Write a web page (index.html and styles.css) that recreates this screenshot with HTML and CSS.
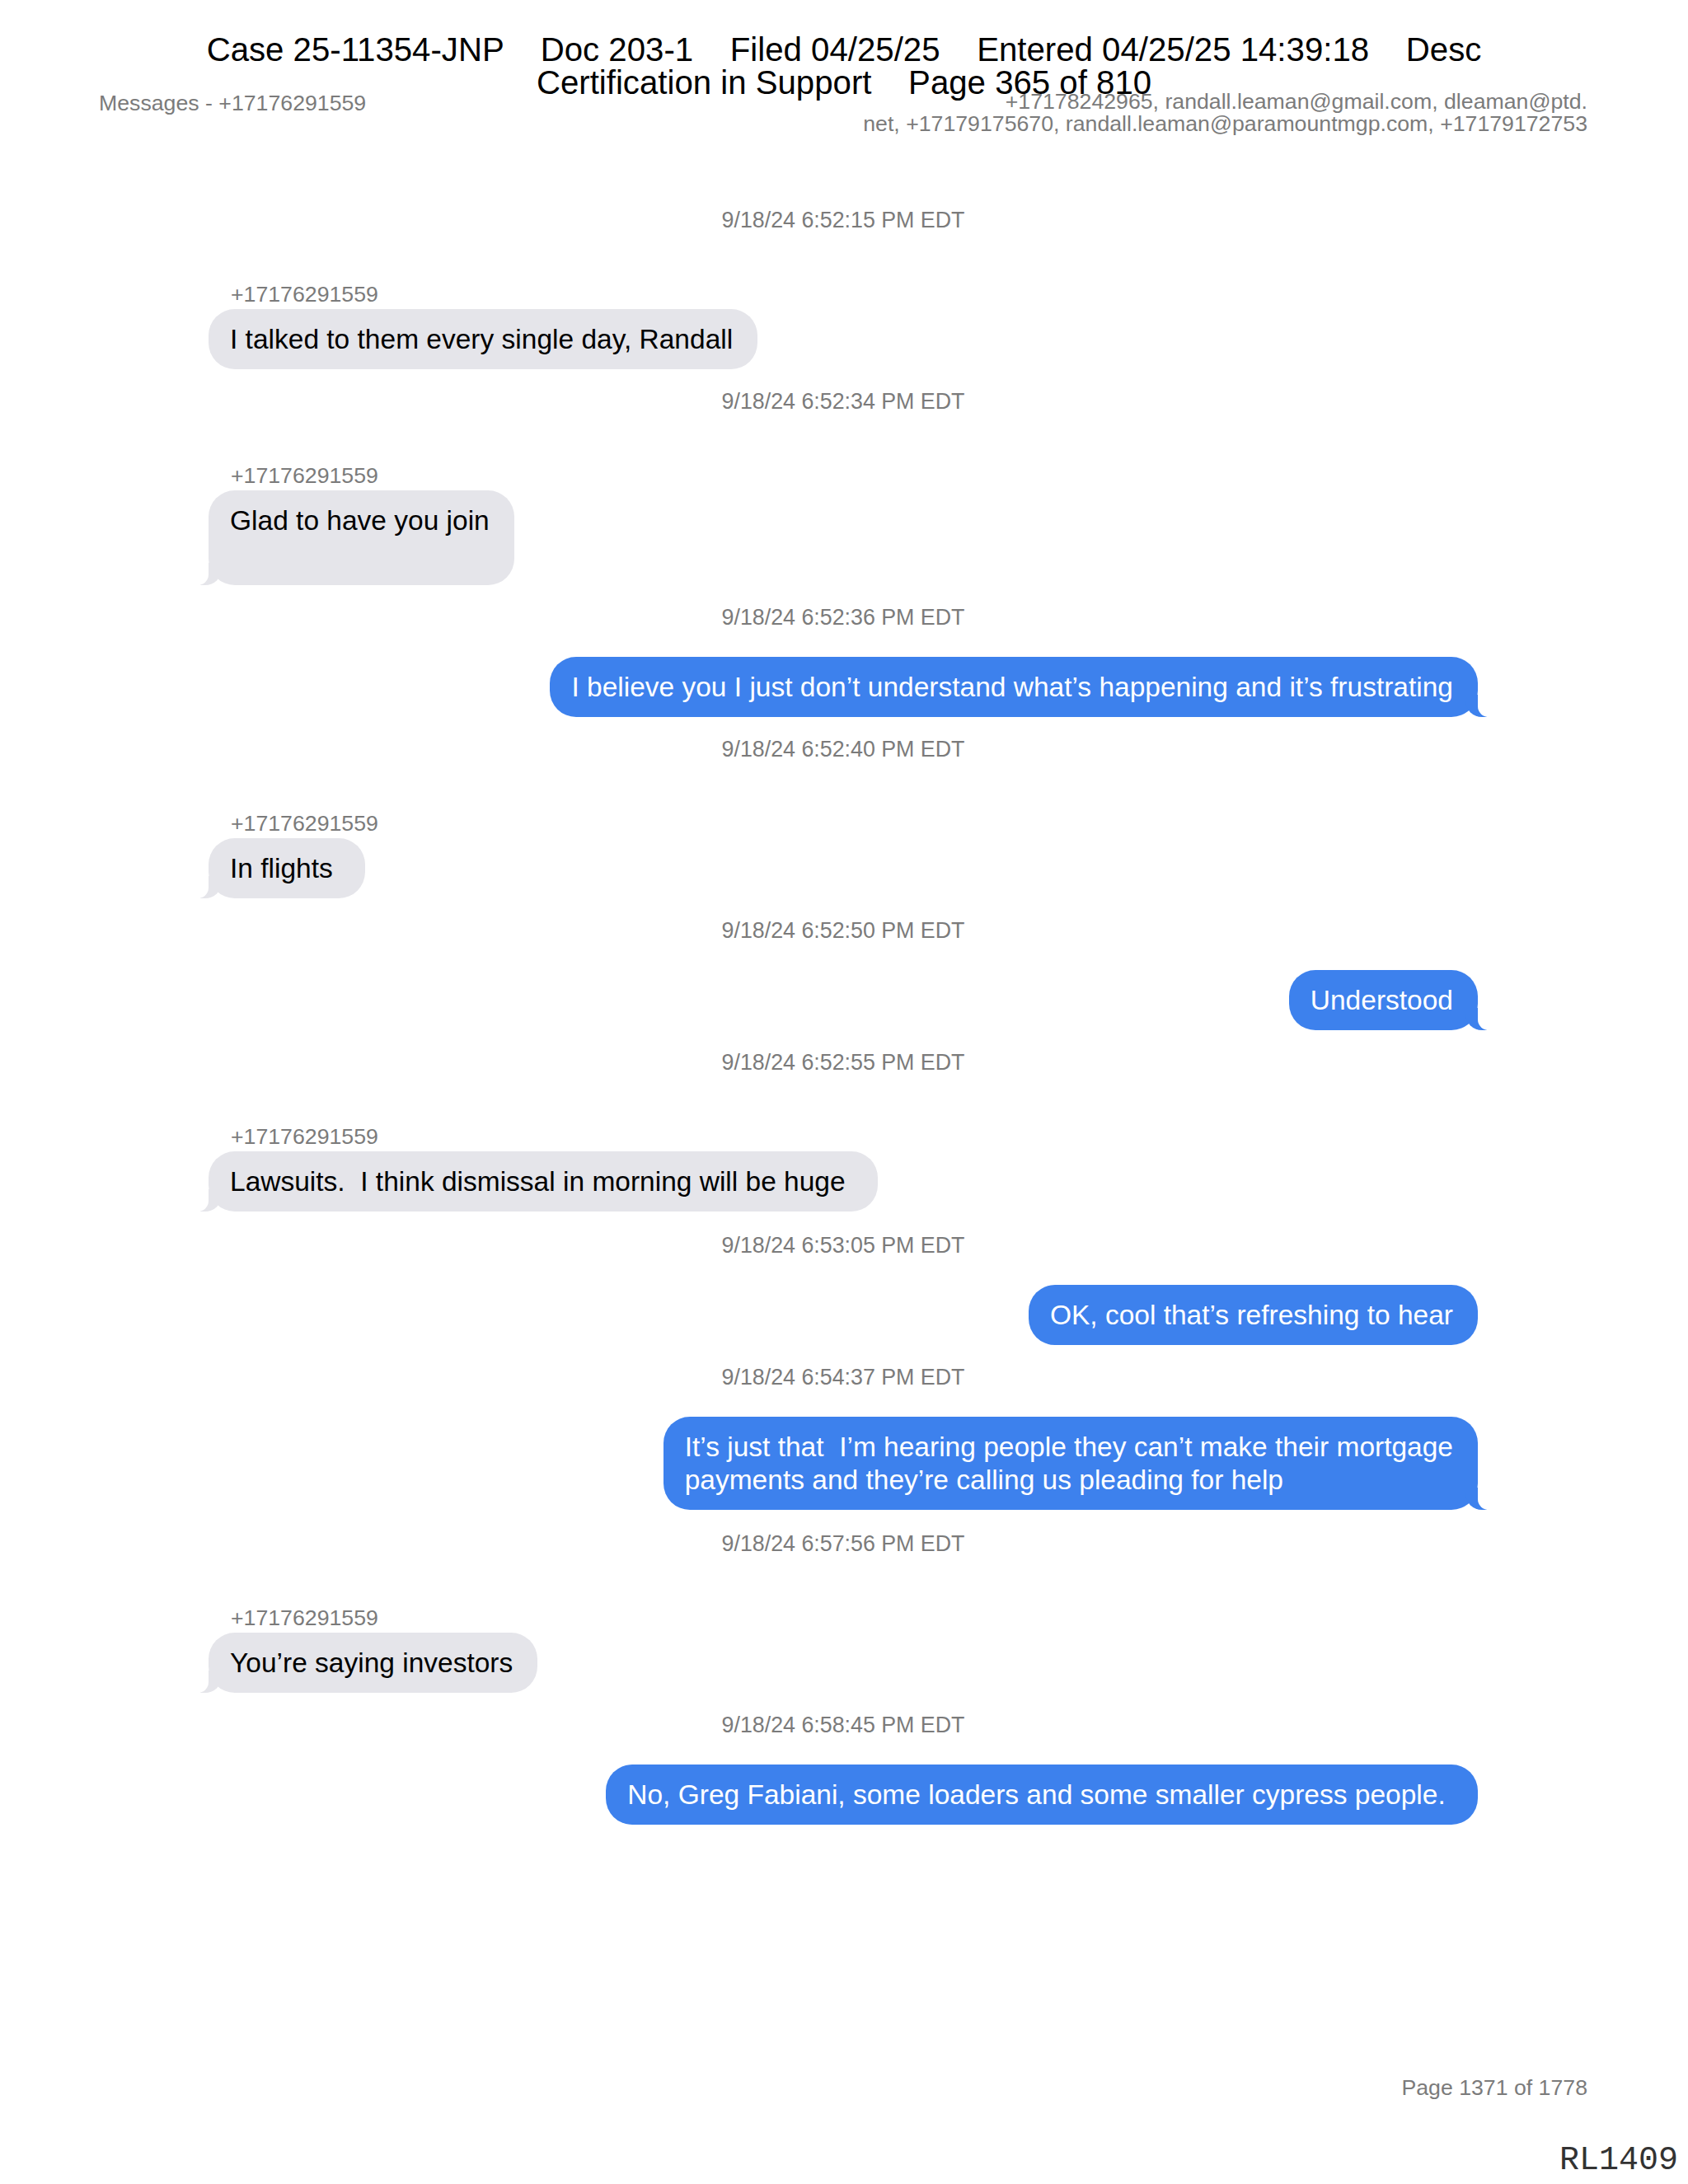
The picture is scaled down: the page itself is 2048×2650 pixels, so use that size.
FILE: index.html
```html
<!DOCTYPE html>
<html lang="en">

<head>
    <meta charset="UTF-8">
    <meta name="viewport" content="width=device-width, initial-scale=1.0">
    <title>Messages - +17176291559</title>
    <link rel="stylesheet" href="styles.css">
</head>

<body>
    <div class="stamp">
        <p>Case 25-11354-JNP    Doc 203-1    Filed 04/25/25    Entered 04/25/25 14:39:18    Desc</p>
        <p>Certification in Support    Page 365 of 810</p>
    </div>

    <div class="page">
        <header class="top">
            <p class="title">Messages - +17176291559</p>
            <p class="people">+17178242965, randall.leaman@gmail.com, dleaman@ptd.<br>net, +17179175670, randall.leaman@paramountmgp.com, +17179172753</p>
        </header>

        <main class="chat">
            <p class="time">9/18/24 6:52:15 PM EDT</p>
            <div class="msg in">
                <p class="from">+17176291559</p>
                <div class="bubble">I talked to them every single day, Randall</div>
            </div>

            <p class="time">9/18/24 6:52:34 PM EDT</p>
            <div class="msg in tail">
                <p class="from">+17176291559</p>
                <div class="bubble tall">Glad to have you join</div>
            </div>

            <p class="time">9/18/24 6:52:36 PM EDT</p>
            <div class="msg out tail">
                <div class="bubble">I believe you I just don’t understand what’s happening and it’s frustrating</div>
            </div>

            <p class="time">9/18/24 6:52:40 PM EDT</p>
            <div class="msg in tail">
                <p class="from">+17176291559</p>
                <div class="bubble">In flights </div>
            </div>

            <p class="time">9/18/24 6:52:50 PM EDT</p>
            <div class="msg out tail">
                <div class="bubble">Understood</div>
            </div>

            <p class="time">9/18/24 6:52:55 PM EDT</p>
            <div class="msg in tail">
                <p class="from">+17176291559</p>
                <div class="bubble">Lawsuits.  I think dismissal in morning will be huge </div>
            </div>

            <p class="time gap">9/18/24 6:53:05 PM EDT</p>
            <div class="msg out">
                <div class="bubble">OK, cool that’s refreshing to hear</div>
            </div>

            <p class="time">9/18/24 6:54:37 PM EDT</p>
            <div class="msg out tail">
                <div class="bubble">It’s just that  I’m hearing people they can’t make their mortgage<br>payments and they’re calling us pleading for help</div>
            </div>

            <p class="time gap">9/18/24 6:57:56 PM EDT</p>
            <div class="msg in tail">
                <p class="from">+17176291559</p>
                <div class="bubble">You’re saying investors</div>
            </div>

            <p class="time">9/18/24 6:58:45 PM EDT</p>
            <div class="msg out">
                <div class="bubble">No, Greg Fabiani, some loaders and some smaller cypress people. </div>
            </div>
        </main>

        <footer class="foot">
            <p class="pageno">Page 1371 of 1778</p>
            <p class="bates">RL1409</p>
        </footer>
    </div>
</body>

</html>
```

FILE: styles.css
```css
body {
    margin: 0;
    background-color: white;
    font-family: "Liberation Sans", Arial, sans-serif;
}

p {
    margin: 0;
}

/* court filing header printed over the page */
.stamp {
    position: absolute;
    top: 41px;
    left: 0;
    right: 0;
    z-index: 5;
    text-align: center;
    font-size: 40.2px;
    line-height: 40px;
    color: black;
}

.stamp p {
    white-space: pre;
}

.page {
    min-height: 2650px;
    box-sizing: border-box;
    padding: 110px 0 8px 0;
    display: flex;
    flex-direction: column;
}

.top {
    display: flex;
    justify-content: space-between;
    align-items: flex-start;
    padding: 0 122px 0 120px;
    color: #7b7b7b;
    font-size: 26.7px;
}

.title {
    line-height: 30px;
}

.people {
    line-height: 27px;
    text-align: right;
}

.chat {
    display: flex;
    flex-direction: column;
    padding: 88px 255px 0 253px;
}

.time {
    font-size: 26.8px;
    line-height: 30px;
    text-align: center;
    color: #7b7b7b;
}

.msg {
    display: flex;
    flex-direction: column;
}

.time + .in {
    margin-top: 60px;
}

.time + .out {
    margin-top: 33px;
}

.msg + .time {
    margin-top: 24px;
}

.msg + .time.gap {
    margin-top: 26px;
}

.in {
    align-items: flex-start;
}

.out {
    align-items: flex-end;
}

.from {
    margin: 0 0 3px 27px;
    font-size: 26.7px;
    line-height: 30px;
    color: #7b7b7b;
}

.bubble {
    position: relative;
    box-sizing: border-box;
    padding: 16.5px 30px 16.5px 26px;
    border-radius: 32px;
    font-size: 33.5px;
    line-height: 40px;
    white-space: pre;
}

.bubble.tall {
    height: 115px;
}

.in .bubble {
    background-color: #e5e5ea;
    color: black;
}

.out .bubble {
    background-color: #3d81ed;
    color: white;
}

/* bubble tails */
.tail .bubble::before,
.tail .bubble::after {
    content: "";
    position: absolute;
    bottom: 0;
    height: 27px;
}

.in.tail .bubble::before {
    left: -10px;
    width: 26px;
    background-color: #e5e5ea;
    border-bottom-right-radius: 20px;
}

.in.tail .bubble::after {
    left: -14px;
    width: 14px;
    background-color: white;
    border-bottom-right-radius: 13px;
}

.out.tail .bubble::before {
    right: -11px;
    width: 26px;
    background-color: #3d81ed;
    border-bottom-left-radius: 20px;
}

.out.tail .bubble::after {
    right: -14px;
    width: 14px;
    background-color: white;
    border-bottom-left-radius: 13px;
}

.foot {
    margin-top: auto;
    display: flex;
    flex-direction: column;
    align-items: flex-end;
    padding-right: 12px;
}

.pageno {
    margin-right: 110px;
    font-size: 26.7px;
    line-height: 30px;
    color: #7b7b7b;
}

.bates {
    margin-top: 54px;
    font-family: "Liberation Mono", "Courier New", monospace;
    font-size: 40px;
    line-height: 40px;
    color: #333;
}
```
